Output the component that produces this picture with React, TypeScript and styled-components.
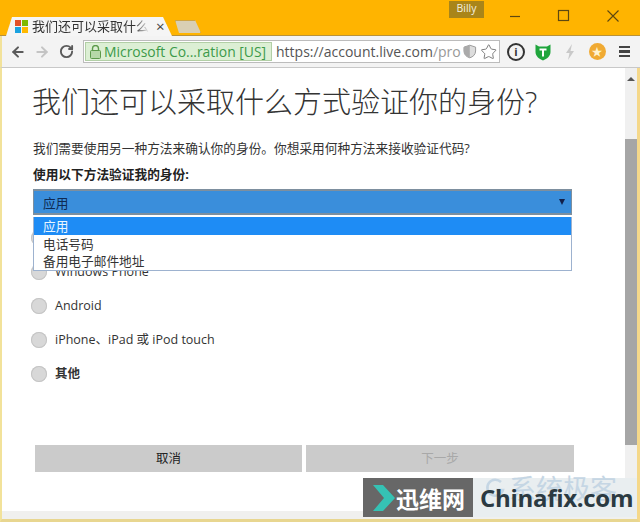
import styled, { createGlobalStyle } from 'styled-components';
import { ArrowLeft, ArrowRight, RotateCw, Star } from 'lucide-react';

const SANS = '"Open Sans", "Noto Sans CJK SC", sans-serif';

const OPTIONS = ['应用', '电话号码', '备用电子邮件地址'];
const RADIOS = ['应用', 'Windows Phone', 'Android', 'iPhone、iPad 或 iPod touch', '其他'];

const App = () => {
  return (
    <Window>
      <GlobalStyle />
      <TitleBar>
        <ActiveTab>
          <Favicon>
            <i style={{ background: '#e2512a' }} />
            <i style={{ background: '#7fb900' }} />
            <i style={{ background: '#1aa2e0' }} />
            <i style={{ background: '#ffb900' }} />
          </Favicon>
          <TabTitle>我们还可以采取什么</TabTitle>
          <TabClose>×</TabClose>
        </ActiveTab>
        <NewTab />
        <Profile>Billy</Profile>
        <WindowButtons>
          <svg width="14" height="14" viewBox="0 0 14 14">
            <path d="M2 7.500h10" stroke="#5e4810" strokeWidth="1.2" />
          </svg>
          <svg width="14" height="14" viewBox="0 0 14 14">
            <rect x="1.500" y="1.500" width="10" height="10" fill="none" stroke="#5e4810" strokeWidth="1.2" />
          </svg>
          <svg width="14" height="14" viewBox="0 0 14 14">
            <path d="M1.500 1.500l11 11M12.500 1.500l-11 11" stroke="#5e4810" strokeWidth="1.1" />
          </svg>
        </WindowButtons>
      </TitleBar>

      <Toolbar>
        <NavButton><ArrowLeft size={16} strokeWidth={3} color="#5a5a5a" /></NavButton>
        <NavButton><ArrowRight size={16} strokeWidth={3} color="#c4c4c4" /></NavButton>
        <NavButton><RotateCw size={15} strokeWidth={3} color="#5a5a5a" /></NavButton>
        <Omnibox>
          <SecureChip>
            <svg width="11" height="14" viewBox="0 0 11 14">
              <rect x="0.500" y="5.500" width="10" height="8" rx="1" fill="#b6d8a8" stroke="#5c9a4a" />
              <path d="M2.500 5.500V3.500a3 3 0 0 1 6 0v2" fill="none" stroke="#5c9a4a" strokeWidth="1.400" />
            </svg>
            Microsoft Co...ration [US]
          </SecureChip>
          <Url>https://account.live.com<span>/pro</span></Url>
          <svg width="14" height="15" viewBox="0 0 14 15">
            <path d="M7 1l6 2v4c0 3.600-2.600 6-6 7-3.400-1-6-3.400-6-7V3z" fill="#ddd" stroke="#999" />
            <path d="M7 1v13c-3.400-1-6-3.400-6-7V3z" fill="#aaa" />
          </svg>
          <Star size={18} strokeWidth={1.3} color="#777" />
        </Omnibox>
        <Extensions>
          <InfoIcon>i</InfoIcon>
          <svg width="18" height="18" viewBox="0 0 18 18">
            <path d="M1.500 1.500L5 3.500h8l3.500-2V9c0 4-3.500 7-7.500 8.500C5 16 1.500 13 1.500 9z" fill="#1fa53c" />
            <path d="M5.500 5.500h7v2H10v6H8v-6H5.500z" fill="#fff" />
          </svg>
          <svg width="12" height="18" viewBox="0 0 12 18">
            <path d="M8 1L2 10h3.500L4 17l6-9H6.500z" fill="#c9c9c9" />
          </svg>
          <StarBadge>★</StarBadge>
          <MenuIcon><i /><i /><i /></MenuIcon>
        </Extensions>
      </Toolbar>

      <Viewport>
        <Page>
          <Heading>我们还可以采取什么方式验证你的身份?</Heading>
          <Intro>我们需要使用另一种方法来确认你的身份。你想采用何种方法来接收验证代码?</Intro>
          <FieldLabel>使用以下方法验证我的身份:</FieldLabel>
          <SelectWrap>
            <SelectBox>
              应用
              <Caret />
            </SelectBox>
            <OptionList>
              {OPTIONS.map((option, i) => (
                <Option key={option} $selected={i === 0}>{option}</Option>
              ))}
            </OptionList>
          </SelectWrap>
          <RadioList>
            {RADIOS.map((radio) => (
              <RadioRow key={radio}>
                <RadioDot />
                <RadioText $bold={radio === '其他'}>{radio}</RadioText>
              </RadioRow>
            ))}
          </RadioList>
          <Actions>
            <ActionButton>取消</ActionButton>
            <ActionButton $disabled>下一步</ActionButton>
          </Actions>
        </Page>
        <Scrollbar>
          <ScrollUp />
          <ScrollThumb />
        </Scrollbar>
      </Viewport>
      <BottomStrip />

      <Watermark>
        <BrandDark>
          <svg width="22" height="26" viewBox="0 0 22 26">
            <path d="M0 0h10l12 13-12 13H0l11-13z" fill="#35c2b4" />
          </svg>
          迅维网
        </BrandDark>
        <BrandLight>
          <GhostLogo width="20" height="20" viewBox="0 0 20 20">
            <path d="M16 4a8 8 0 1 0 2 8H11" fill="none" stroke="#c5d6e4" strokeWidth="2.500" />
          </GhostLogo>
          <Ghost>系统极客</Ghost>
          <BrandName>Chinafix.com</BrandName>
        </BrandLight>
      </Watermark>
    </Window>
  );
};

const GlobalStyle = createGlobalStyle`
  html, body {
    margin: 0;
    padding: 0;
    background: #fff;
  }
`;

const Window = styled.div`
  position: relative;
  display: flex;
  flex-direction: column;
  width: 640px;
  height: 522px;
  overflow: hidden;
  font-family: ${SANS};
  box-sizing: border-box;
  background: #ffb400;
`;

const TitleBar = styled.div`
  display: flex;
  align-items: flex-end;
  height: 36px;
  flex: none;
  padding-left: 6px;
  background: #ffb400;
  border-bottom: 1px solid #b8923a;
  box-sizing: border-box;
`;

const ActiveTab = styled.div`
  display: flex;
  align-items: center;
  width: 166px;
  height: 19px;
  margin-bottom: -1px;
  padding: 0 0 0 9px;
  box-sizing: border-box;
  background: #f5f5f5;
  clip-path: polygon(0 100%, 6px 0, 157px 0, 100% 100%);
`;

const Favicon = styled.div`
  display: grid;
  grid-template-columns: 6px 6px;
  grid-template-rows: 6px 6px;
  gap: 1px;
  flex: none;
  i {
    display: block;
  }
`;

const TabTitle = styled.span`
  width: 117px;
  flex: none;
  margin-left: 4px;
  white-space: nowrap;
  font-size: 13px;
  line-height: 19px;
  color: #333;
  mask-image: linear-gradient(to right, #000 88%, transparent 100%);
`;

const TabClose = styled.span`
  margin-left: 7px;
  font-size: 15px;
  line-height: 19px;
  color: #444;
`;

const NewTab = styled.div`
  width: 26px;
  height: 13px;
  margin: 0 0 2px 3px;
  background: #d9cfb4;
  border: 1px solid #cfa544;
  border-bottom: none;
  box-sizing: border-box;
  clip-path: polygon(0 0, 20px 0, 100% 100%, 4px 100%);
  align-self: flex-end;
`;

const Profile = styled.div`
  align-self: flex-start;
  margin: 1px 0 0 248px;
  width: 35px;
  height: 17px;
  background: #a98519;
  color: #f5f0e0;
  font-size: 10.500px;
  line-height: 15px;
  text-align: center;
`;

const WindowButtons = styled.div`
  align-self: flex-start;
  display: flex;
  gap: 35px;
  margin: 9px 0 0 24px;
`;

const Toolbar = styled.div`
  display: flex;
  align-items: center;
  height: 32px;
  flex: none;
  padding-left: 4px;
  background: #f3f3f3;
  border-bottom: 1px solid #c8c8c8;
  border-left: 2px solid #f2e29a;
  box-sizing: border-box;
`;

const NavButton = styled.div`
  display: flex;
  justify-content: center;
  width: 24px;
`;

const Omnibox = styled.div`
  display: flex;
  align-items: center;
  width: 417px;
  height: 23px;
  margin-left: 5px;
  padding: 0 2px 0 1px;
  background: #fff;
  border: 1px solid #bcbcbc;
  box-sizing: border-box;
  gap: 3px;
`;

const SecureChip = styled.div`
  display: flex;
  align-items: center;
  gap: 3px;
  width: 187px;
  height: 19px;
  flex: none;
  padding-left: 4px;
  box-sizing: border-box;
  background: #dcefd4;
  border: 1px solid #b2cfa6;
  color: #3c9a4a;
  font-size: 13.900px;
  white-space: nowrap;
`;

const Url = styled.div`
  width: 184px;
  flex: none;
  margin-left: 1px;
  font-size: 14px;
  color: #555;
  white-space: nowrap;
  span {
    color: #999;
  }
`;

const Extensions = styled.div`
  display: grid;
  grid-template-columns: repeat(5, 27px);
  justify-items: center;
  align-items: center;
  margin-left: 2.500px;
`;

const InfoIcon = styled.div`
  width: 14px;
  height: 14px;
  border: 2px solid #333;
  border-radius: 50%;
  font-size: 11px;
  font-weight: 700;
  line-height: 14px;
  text-align: center;
  color: #333;
`;

const StarBadge = styled.div`
  width: 17px;
  height: 17px;
  border-radius: 50%;
  background: #f0aa33;
  color: #fff3cf;
  font-size: 11px;
  line-height: 17px;
  text-align: center;
`;

const MenuIcon = styled.div`
  display: flex;
  flex-direction: column;
  gap: 2px;
  i {
    display: block;
    width: 11px;
    height: 2.500px;
    background: #444;
  }
`;

const Viewport = styled.div`
  display: flex;
  flex: 1;
  min-height: 0;
  background: #fff;
  border-left: 2px solid #f2e29a;
  border-right: 3px solid #f5d88a;
`;

const Page = styled.main`
  flex: 1;
  min-width: 0;
  padding: 15px 0 0 31px;
`;

const Heading = styled.h1`
  margin: 0 0 0 -1px;
  width: 540px;
  font-size: 29px;
  font-weight: 300;
  line-height: 38px;
  color: #333;
  white-space: nowrap;
`;

const Intro = styled.p`
  margin: 18px 0 0;
  font-size: 12.700px;
  line-height: 18px;
  color: #333;
  white-space: nowrap;
`;

const FieldLabel = styled.div`
  margin-top: 8px;
  font-size: 12.700px;
  font-weight: 700;
  line-height: 18px;
  color: #222;
`;

const SelectWrap = styled.div`
  position: relative;
  width: 539px;
  margin-top: 6px;
`;

const SelectBox = styled.div`
  display: flex;
  align-items: center;
  justify-content: space-between;
  height: 26px;
  padding: 0 6px 0 9px;
  box-sizing: border-box;
  background: #3a8edb;
  border: 1px solid #7d8f9f;
  border-width: 2px 1px;
  font-size: 12.700px;
  color: #0f2a52;
`;

const Caret = styled.span`
  width: 0;
  height: 0;
  border-left: 3.500px solid transparent;
  border-right: 3.500px solid transparent;
  border-top: 6px solid #12204a;
`;

const OptionList = styled.ul`
  position: absolute;
  z-index: 2;
  top: 100%;
  left: 0;
  right: 0;
  margin: 2px 0 0;
  padding: 0;
  list-style: none;
  background: #fff;
  border: 1px solid #9db2cf;
  border-top: none;
`;

const Option = styled.li<{ $selected?: boolean }>`
  height: 17.600px;
  padding-left: 9px;
  font-size: 12.700px;
  line-height: 18px;
  background: ${(p) => (p.$selected ? '#1e8cf5' : '#fff')};
  color: ${(p) => (p.$selected ? '#eaf6ff' : '#333')};
`;

const RadioList = styled.div`
  display: flex;
  flex-direction: column;
  margin-top: 6px;
  margin-left: -2px;
`;

const RadioRow = styled.label`
  display: flex;
  align-items: center;
  gap: 8px;
  height: 34px;
`;

const RadioDot = styled.span`
  width: 16px;
  height: 16px;
  border-radius: 50%;
  background: #d8d8d8;
  box-shadow: inset 0 0 0 1px #c4c4c4;
  flex: none;
`;

const RadioText = styled.span<{ $bold?: boolean }>`
  font-size: 12.500px;
  font-weight: ${(p) => (p.$bold ? 700 : 400)};
  line-height: 16px;
  color: #333;
`;

const Actions = styled.div`
  display: grid;
  grid-template-columns: 267px 268px;
  gap: 4px;
  margin: 54px 0 0 2px;
`;

const ActionButton = styled.div<{ $disabled?: boolean }>`
  height: 27px;
  background: #cbcbcb;
  font-size: 12.500px;
  line-height: 27px;
  text-align: center;
  color: ${(p) => (p.$disabled ? '#a8a8a8' : '#222')};
`;

const Scrollbar = styled.aside`
  display: flex;
  flex-direction: column;
  width: 12px;
  flex: none;
  background: #f0f0f0;
`;

const ScrollUp = styled.div`
  height: 0;
  width: 0;
  margin: 9px auto 0;
  border-left: 4px solid transparent;
  border-right: 4px solid transparent;
  border-bottom: 4px solid #555;
`;

const ScrollThumb = styled.div`
  height: 306px;
  margin-top: 58px;
  background: #a6a6a6;
`;

const BottomStrip = styled.div`
  height: 11px;
  flex: none;
  background: #f0f0ee;
  border-left: 2px solid #f2e29a;
  border-right: 3px solid #f5d88a;
  border-bottom: 3px solid #e8d690;
  box-sizing: border-box;
`;

const Watermark = styled.div`
  position: absolute;
  right: 3px;
  bottom: 5px;
  display: flex;
  height: 39px;
`;

const BrandDark = styled.div`
  display: flex;
  align-items: center;
  gap: 1px;
  width: 110px;
  padding-left: 10px;
  box-sizing: border-box;
  background: #676767;
  color: #fff;
  font-size: 23px;
  font-weight: 700;
  white-space: nowrap;
`;

const BrandLight = styled.div`
  position: relative;
  display: flex;
  align-items: center;
  width: 164px;
  padding-left: 7px;
  box-sizing: border-box;
  background: #e9eef0;
`;

const GhostLogo = styled.svg`
  position: absolute;
  top: 0;
  left: 12px;
`;

const Ghost = styled.span`
  position: absolute;
  top: -4px;
  left: 36px;
  font-size: 27px;
  line-height: 30px;
  color: #c5d6e4;
  white-space: nowrap;
`;

const BrandName = styled.span`
  position: relative;
  font-family: "Open Sans", sans-serif;
  font-size: 24px;
  font-weight: 700;
  letter-spacing: -0.300px;
  color: #2b3a42;
  white-space: nowrap;
`;

export default App;
